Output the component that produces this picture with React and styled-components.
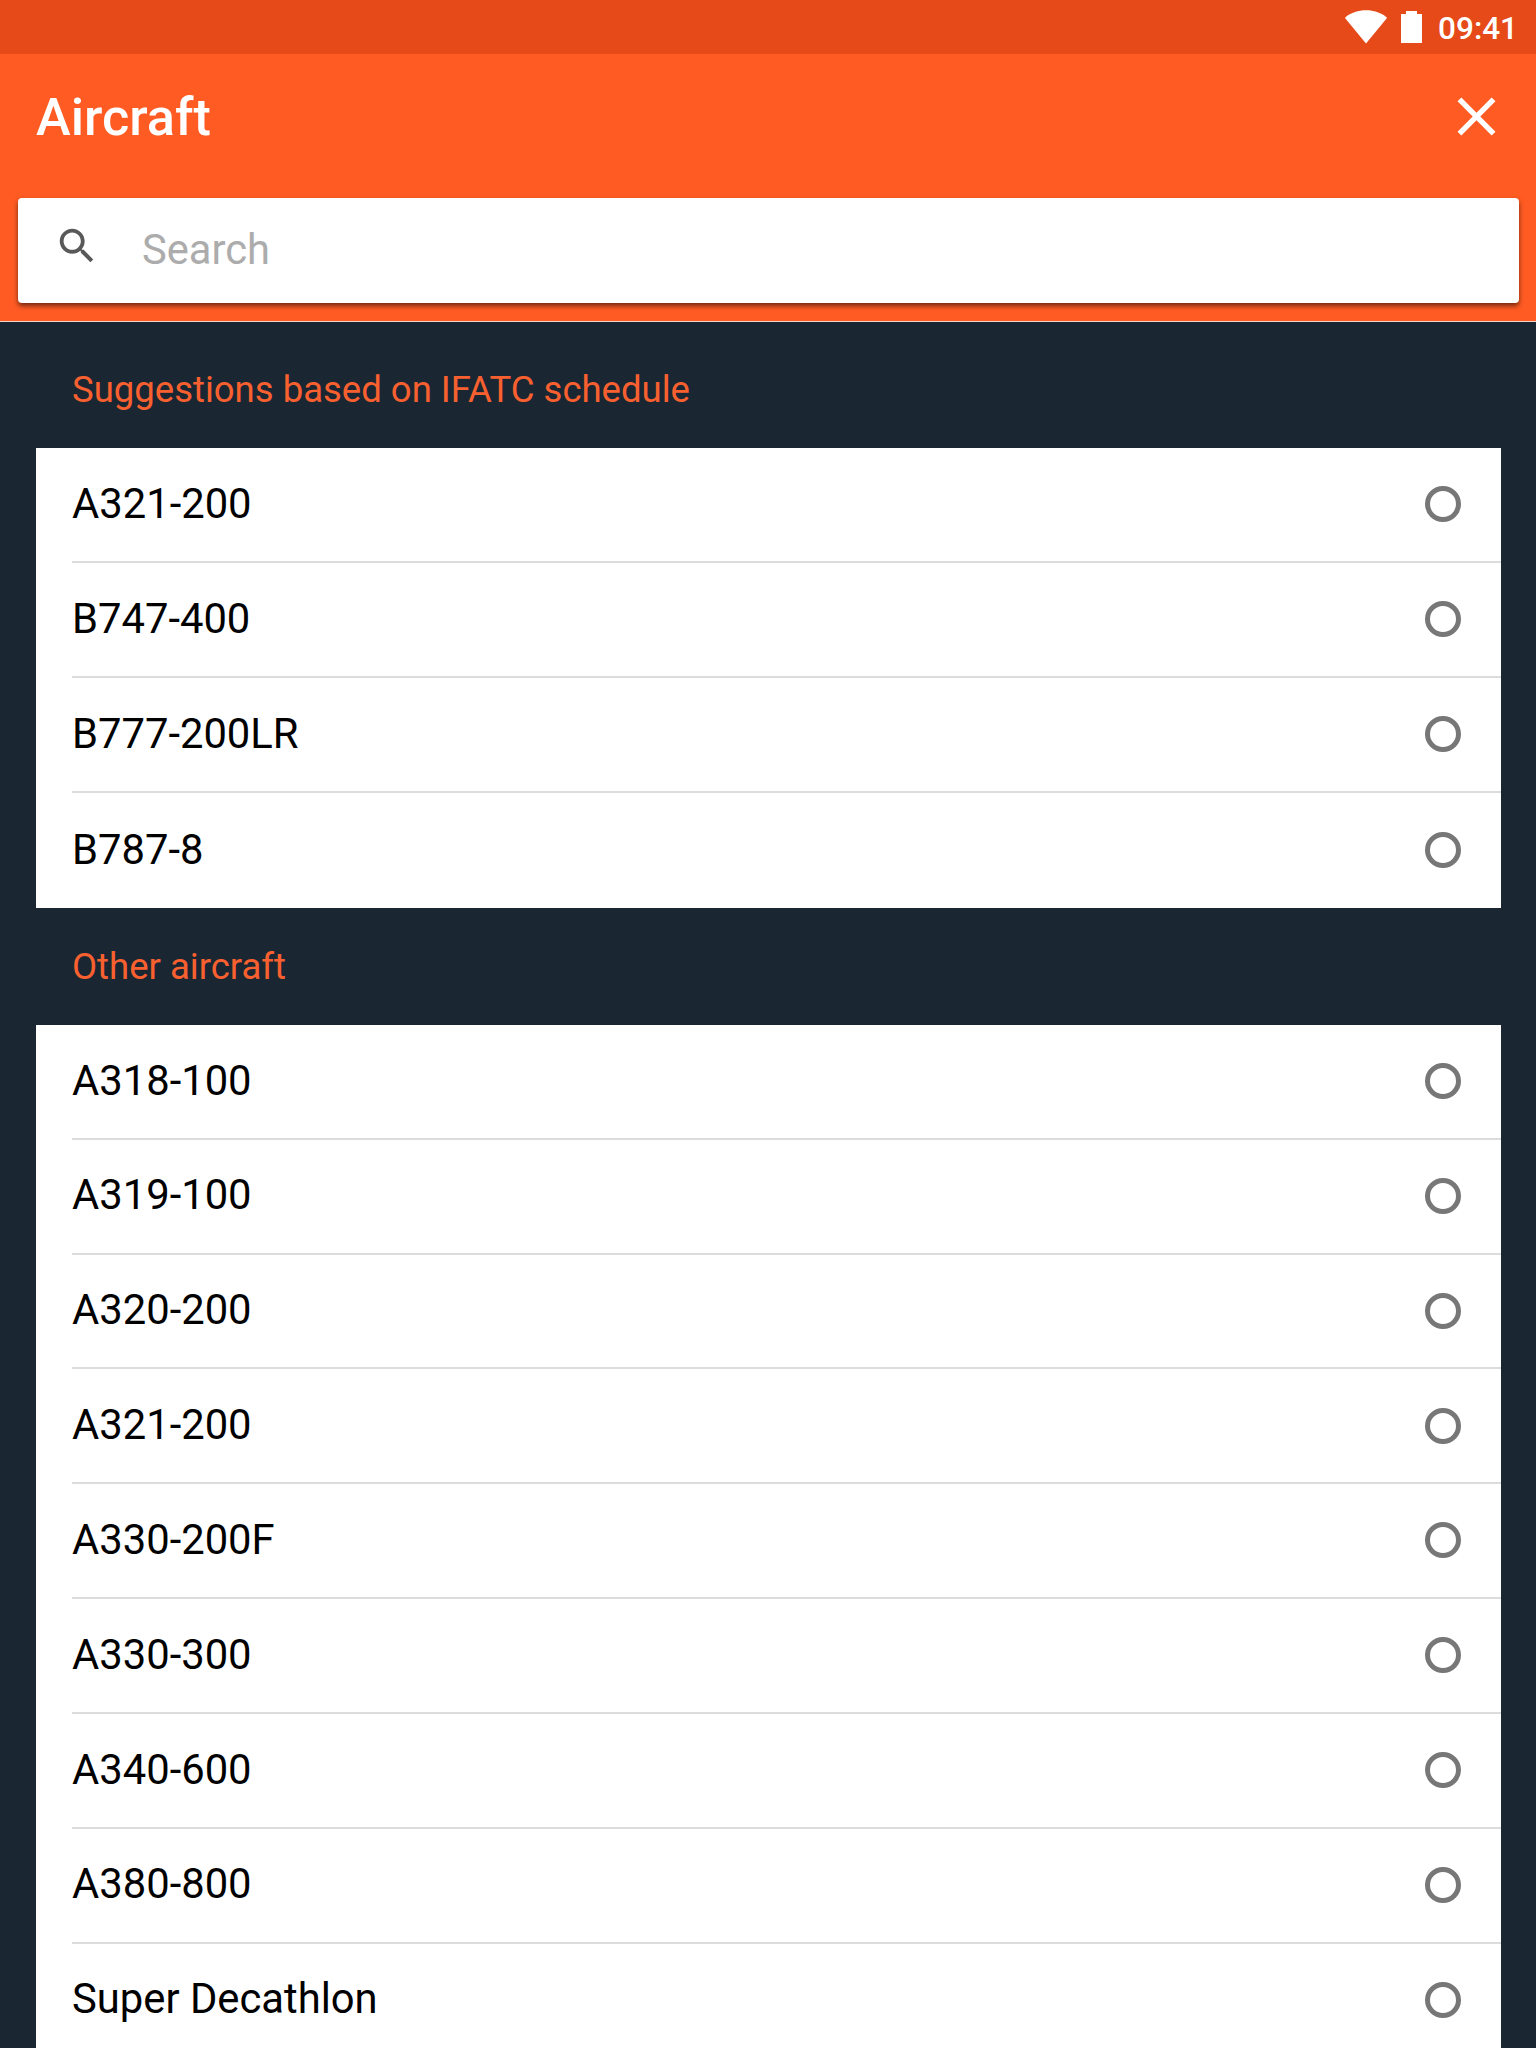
import React, { useState } from "react";
import styled, { createGlobalStyle } from "styled-components";

const sections = [
  {
    title: "Suggestions based on IFATC schedule",
    items: ["A321-200", "B747-400", "B777-200LR", "B787-8"],
  },
  {
    title: "Other aircraft",
    items: [
      "A318-100",
      "A319-100",
      "A320-200",
      "A321-200",
      "A330-200F",
      "A330-300",
      "A340-600",
      "A380-800",
      "Super Decathlon",
    ],
  },
];

function App() {
  const [search, setSearch] = useState("");

  return (
    <Page>
      <GlobalStyle />
      <StatusBar>
        <WifiIcon viewBox="0 0 42 34">
          <path d="M21 33.5L0.2 8.2C0 7.6 0.2 7.2 0.8 6.9C6.4 2.7 13 0.3 21 0.3S35.6 2.7 41.2 6.9C41.8 7.2 42 7.6 41.8 8.2Z" />
        </WifiIcon>
        <BatteryIcon viewBox="0 0 21 32">
          <path d="M5 0H16V3H21V32H0V3H5Z" />
        </BatteryIcon>
        <Clock>09:41</Clock>
      </StatusBar>
      <Header>
        <TitleBar>
          <Title>Aircraft</Title>
          <CloseButton aria-label="Close">
            <svg viewBox="0 0 24 24">
              <path d="M19 6.41L17.59 5 12 10.59 6.41 5 5 6.41 10.59 12 5 17.59 6.41 19 12 13.41 17.59 19 19 17.59 13.41 12z" />
            </svg>
          </CloseButton>
        </TitleBar>
        <SearchBar>
          <SearchIcon viewBox="0 0 24 24">
            <path d="M15.5 14h-.79l-.28-.27C15.41 12.59 16 11.11 16 9.5 16 5.91 13.09 3 9.5 3S3 5.91 3 9.5 5.91 16 9.5 16c1.61 0 3.09-.59 4.23-1.57l.27.28v.79l5 4.99L20.49 19l-4.99-5zm-6 0C7.01 14 5 11.99 5 9.5S7.01 5 9.5 5 14 7.01 14 9.5 11.99 14 9.5 14z" />
          </SearchIcon>
          <input
            type="text"
            placeholder="Search"
            value={search}
            onChange={(e) => setSearch(e.target.value)}
          />
        </SearchBar>
      </Header>
      {sections.map((section, index) => (
        <section key={section.title}>
          <SectionTitle $first={index === 0}>{section.title}</SectionTitle>
          <List>
            {section.items.map((item) => (
              <Row key={item}>
                <Label>{item}</Label>
                <Radio />
              </Row>
            ))}
          </List>
        </section>
      ))}
    </Page>
  );
}

const GlobalStyle = createGlobalStyle`
  * {
    box-sizing: border-box;
  }

  body {
    margin: 0;
    background-color: #1a2733;
    font-family: Roboto, sans-serif;
  }
`;

const Page = styled.div`
  width: 1536px;
  height: 2048px;
  overflow: hidden;
  background-color: #1a2733;
`;

const StatusBar = styled.div`
  height: 54px;
  padding-right: 18px;
  display: flex;
  align-items: flex-start;
  justify-content: flex-end;
  background-color: #e64a19;
  color: #fff;
`;

const WifiIcon = styled.svg`
  width: 42px;
  height: 34px;
  margin: 9.5px 14px 0 0;
  fill: #fff;
`;

const BatteryIcon = styled.svg`
  width: 21px;
  height: 32px;
  margin: 11px 16px 0 0;
  fill: #fff;
`;

const Clock = styled.span`
  font-size: 31.5px;
  font-weight: 500;
  line-height: 57px;
`;

const Header = styled.header`
  height: 268px;
  padding: 0 17px 0 18px;
  background-color: #ff5b23;
  border-bottom: 1px solid #f3d3ca;
`;

const TitleBar = styled.div`
  height: 144px;
  padding: 0 9.75px 0 18px;
  display: flex;
  align-items: flex-start;
  justify-content: space-between;
`;

const Title = styled.h1`
  margin: 0;
  color: #fff;
  font-size: 52.3px;
  font-weight: 500;
  line-height: 127px;
`;

const CloseButton = styled.button`
  width: 65px;
  height: 65px;
  margin-top: 29.5px;
  padding: 0;
  border: none;
  background: none;
  cursor: pointer;

  svg {
    display: block;
    width: 65px;
    height: 65px;
    fill: #fff;
  }
`;

const SearchBar = styled.div`
  height: 105px;
  padding-left: 36px;
  display: flex;
  align-items: flex-start;
  background-color: #fff;
  border-radius: 4px;
  box-shadow: 0 3px 5px rgba(0, 0, 0, 0.55);

  input {
    flex: 1;
    height: 103px;
    padding: 0;
    border: none;
    outline: none;
    background: none;
    color: #000;
    font-family: inherit;
    font-size: 41.7px;
  }

  input::placeholder {
    color: #acacac;
    opacity: 1;
  }
`;

const SearchIcon = styled.svg`
  width: 46px;
  height: 46px;
  margin: 25px 42px 0 0;
  fill: #595959;
`;

const SectionTitle = styled.h2`
  height: ${(props) => (props.$first ? "126.33px" : "116.9px")};
  margin: 0;
  padding: ${(props) => (props.$first ? "9px" : "0")} 0 0 72px;
  color: #f9602f;
  font-size: 36.5px;
  font-weight: 400;
  line-height: 117px;
`;

const List = styled.ul`
  margin: 0 35px 0 36px;
  padding: 0;
  list-style: none;
  background-color: #fff;
`;

const Label = styled.span`
  margin-top: 0.41px;
  color: #000;
  font-size: 41.75px;
  line-height: 109px;
`;

const Radio = styled.span`
  width: 36px;
  height: 36px;
  margin-top: 38.13px;
  border: 5px solid #777;
  border-radius: 50%;
`;

const Row = styled.li`
  height: 114.9px;
  margin-left: 36px;
  padding-right: 40px;
  display: flex;
  align-items: flex-start;
  justify-content: space-between;
  border-bottom: 2px solid #dcdcdc;

  &:first-child ${Label} {
    margin-top: 0.9px;
  }

  &:last-child {
    padding-top: 1.3px;
    border-bottom: none;
  }

  section:last-child &:last-child {
    padding-top: 0;
  }
`;

export default App;
